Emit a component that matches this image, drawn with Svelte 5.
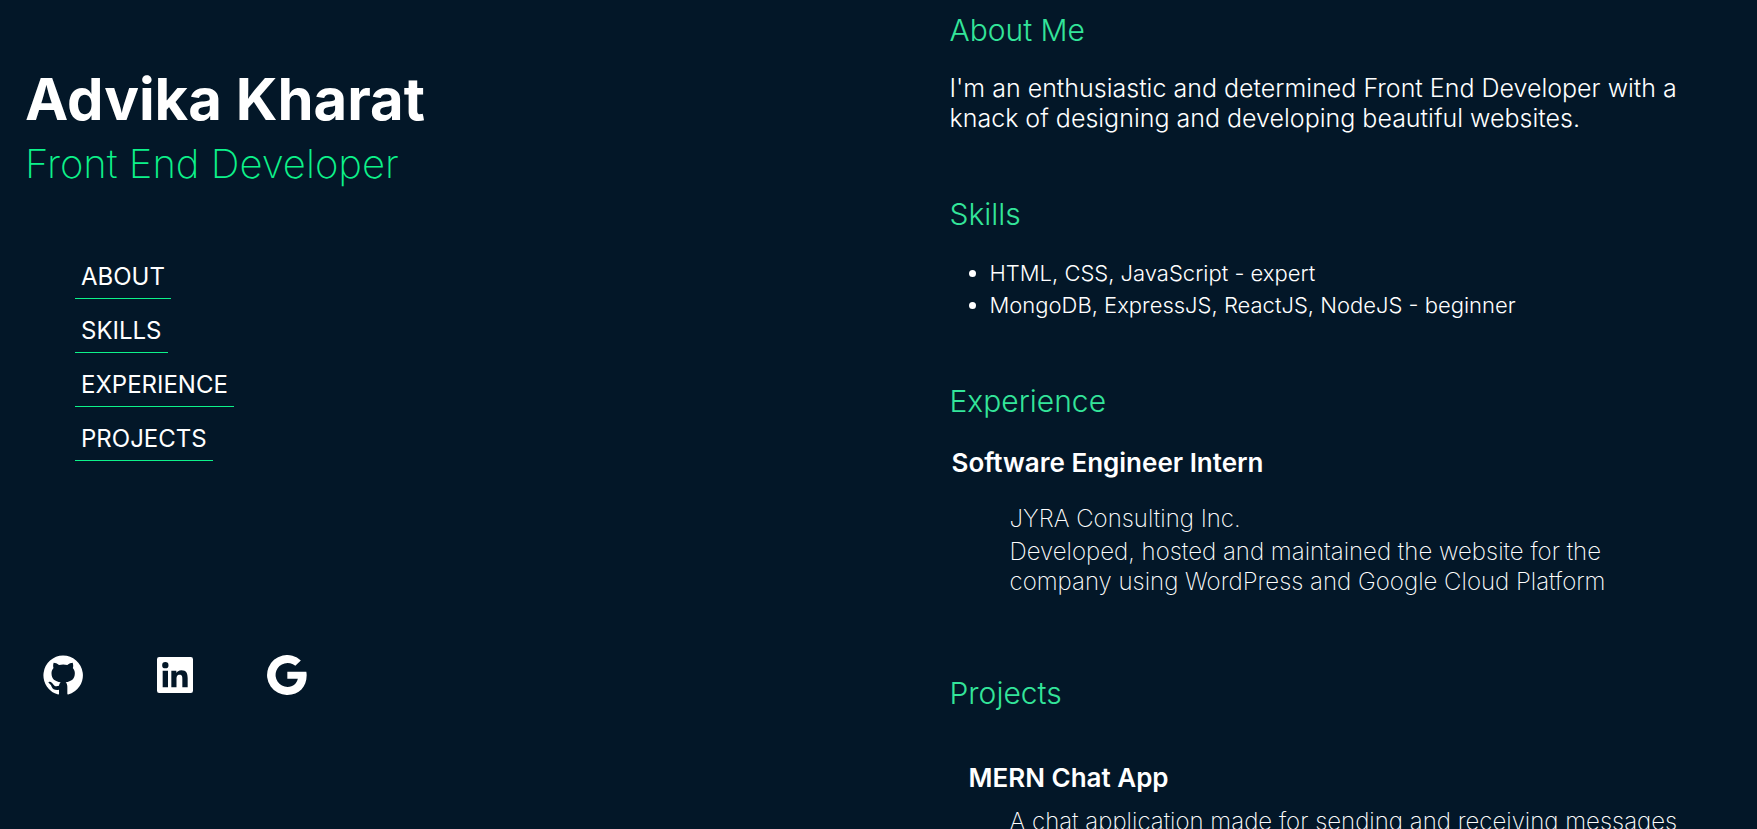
<script>
  const links = [
    ['About', '#about'],
    ['Skills', '#skills'],
    ['Experience', '#experience'],
    ['Projects', '#projects']
  ];
  const socials = [
    { label: 'GitHub', d: 'M12 .3A11.900 11.900 0 0 0 9.100 23.700c.3.1.5-.1.5-.4v-2.400c-2.500.4-3.700-.4-4.400-1.900-.5-1.200-1-1.700-1.700-2.200-.5-.4-.1-.8.6-.7.9.1 1.500.8 2.100 1.600.8 1.200 1.900 1.300 3.400.8.1-.9.5-1.600 1-2.100-3.400-.4-5.500-2-5.500-5.400 0-1.300.4-2.300 1.200-3.200-.3-1-.3-2 .1-3.100 1 0 2.100.5 3.200 1.300a11.500 11.500 0 0 1 5 0c1.100-.8 2.200-1.300 3.200-1.300.4 1.100.4 2.100.1 3.100.8.9 1.200 1.900 1.200 3.200 0 3.400-2.100 5-5.500 5.400.6.6 1 1.400 1 2.600v4.300c0 .3.200.5.5.4A11.900 11.900 0 0 0 12 .3z' },
    { label: 'LinkedIn', d: 'M21.500 1.200h-19a1.300 1.300 0 0 0-1.300 1.300v19a1.300 1.300 0 0 0 1.300 1.300h19a1.300 1.300 0 0 0 1.300-1.300v-19a1.300 1.300 0 0 0-1.300-1.300zM7.800 19.400H4.600V9.400H7.800zM6.200 8a1.900 1.900 0 1 1 0-3.800 1.900 1.900 0 0 1 0 3.800zM19.600 19.400H16.400v-5c0-1.200 0-2.600-1.600-2.600s-1.900 1.300-1.900 2.600v5H9.800V9.400h3v1.400c.4-.8 1.500-1.700 3-1.700 3.200 0 3.800 2.100 3.800 4.900z' },
    { label: 'Google', d: 'M12.200 10v4.300h6.300c-.5 2.500-2.700 4.900-6.200 4.900a7.200 7.200 0 1 1 4.700-12.700l3.300-3.200A12 12 0 1 0 12.300 24c7 0 11.500-4.900 11.500-11.800 0-.8-.1-1.600-.2-2.200z' }
  ];
</script>

<main>
  <header>
    <h1>Advika Kharat</h1>
    <p class="role">Front End Developer</p>
    <nav>
      {#each links as [name, href]}
        <a {href}>{name}</a>
      {/each}
    </nav>
    <div class="socials">
      {#each socials as s}
        <a href="#contact" aria-label={s.label}><svg viewBox="0 0 24 24"><path fill-rule="evenodd" d={s.d} /></svg></a>
      {/each}
    </div>
  </header>
  <div class="content">
    <section id="about">
      <h2>About Me</h2>
      <p class="intro">I'm an enthusiastic and determined Front End Developer with a knack of designing and developing beautiful websites.</p>
    </section>
    <section id="skills">
      <h2>Skills</h2>
      <ul>
        <li>HTML, CSS, JavaScript - expert</li>
        <li>MongoDB, ExpressJS, ReactJS, NodeJS - beginner</li>
      </ul>
    </section>
    <section id="experience">
      <h2>Experience</h2>
      <h3>Software Engineer Intern</h3>
      <div class="details">
        <p class="company">JYRA Consulting Inc.</p>
        <p>Developed, hosted and maintained the website for the company using WordPress and Google Cloud Platform</p>
      </div>
    </section>
    <section id="projects">
      <h2>Projects</h2>
      <h3>MERN Chat App</h3>
      <p class="details">A chat application made for sending and receiving messages</p>
    </section>
  </div>
</main>

<style>
  :global(body) { background: #031728; }
  main {
    display: grid;
    grid-template-columns: 1fr 1fr;
    height: 100vh;
    overflow: hidden;
    color: #fff;
    font-family: Inter, sans-serif;
    font-size: 24px;
    line-height: 30px;
    font-weight: 300;
  }
  h1, h2, h3, p, ul { margin: 0; }
  a { color: #fff; text-decoration: none; }
  header { padding: 64px 25px; }
  h1 { font-size: 58px; line-height: 70px; font-weight: 700; }
  .role { font-size: 40px; line-height: 60px; font-weight: 200; color: #0df28a; }
  nav { display: flex; flex-direction: column; align-items: flex-start; gap: 13px; padding: 64px 50px 0; }
  nav a { padding: 4px 6px 6px; border-bottom: 1px solid #0df28a; font-weight: 400; text-transform: uppercase; }
  .socials { display: flex; gap: 72px; padding: 194px 18px 0; }
  .socials a { display: flex; }
  svg { width: 40px; height: 40px; fill: #fff; }
  .content { padding: 12px 72px 0 71px; }
  h2 { font-size: 30px; line-height: 36px; font-weight: 300; color: #33e59a; }
  h3 { font-size: 26px; line-height: 32px; font-weight: 600; }
  .intro { padding-top: 25px; font-size: 25px; }
  #skills { padding-top: 63px; }
  ul { padding: 25px 0 0 40px; font-size: 22px; line-height: 32px; }
  #experience { padding-top: 62px; }
  #experience h3 { padding: 28px 2px 0; }
  .details { padding: 25px 60px 0; font-weight: 200; }
  .company { padding-bottom: 3px; }
  #projects { padding-top: 78px; }
  #projects h3 { padding: 51px 19px 0; }
  #projects .details { padding: 13px 0 0 60px; }
</style>
